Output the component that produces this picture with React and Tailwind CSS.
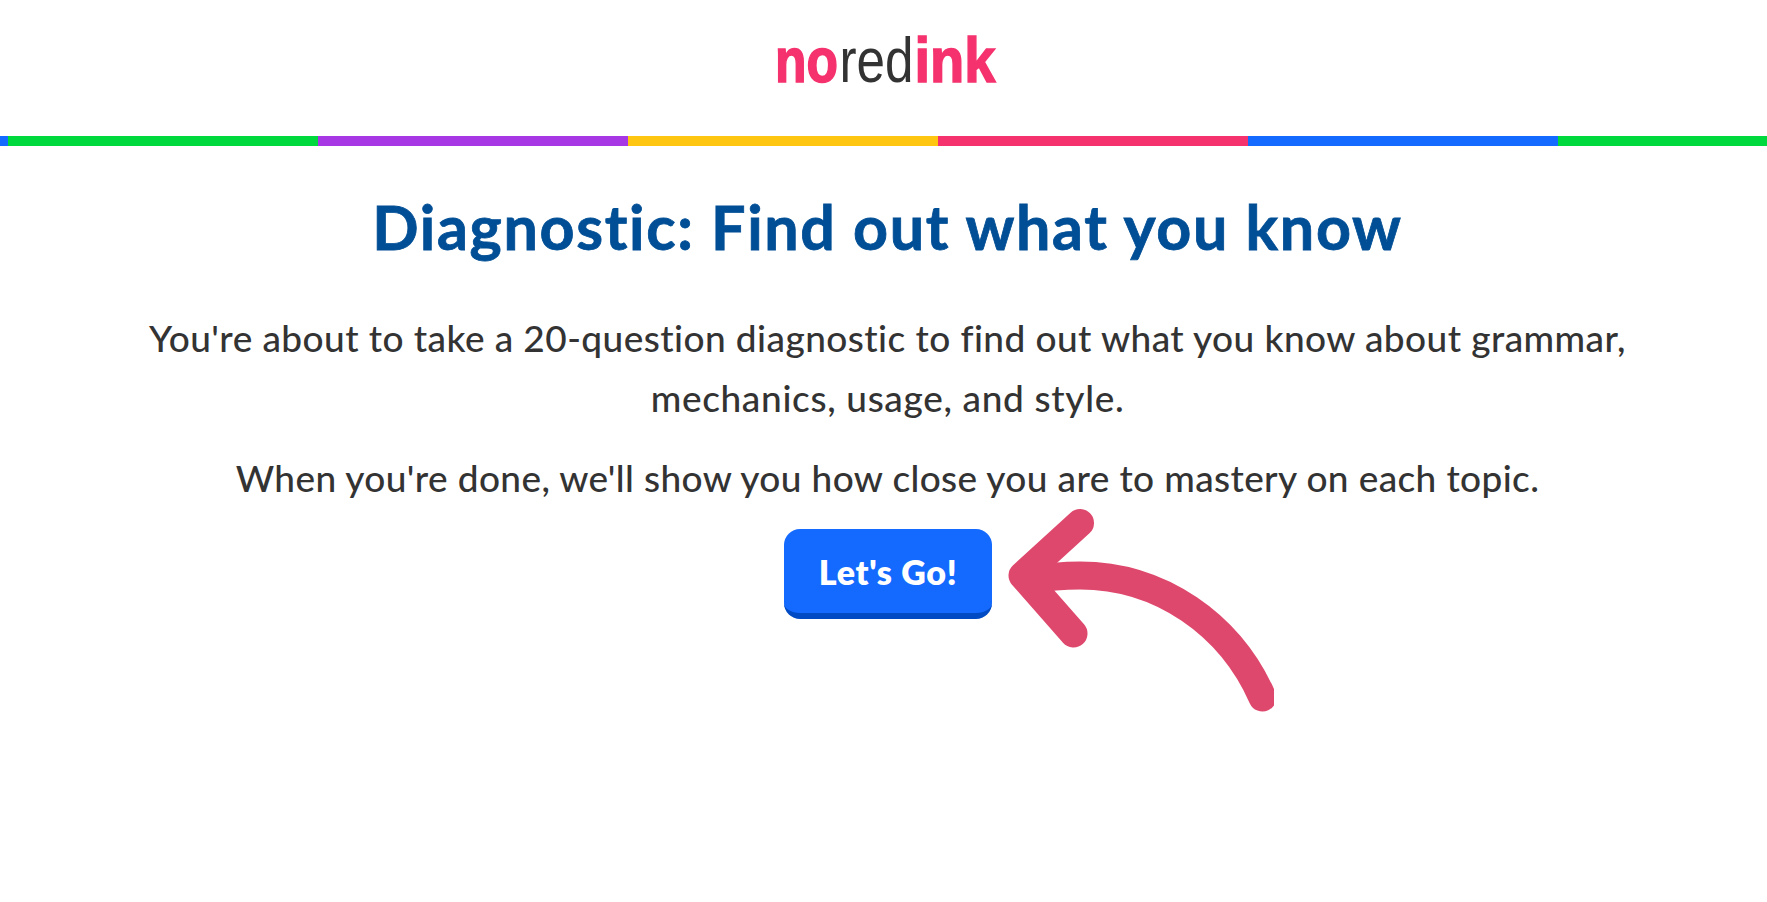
import React from "react";

const STRIPES = [
  "w-2 bg-[#146aff]",
  "w-[310px] bg-[#00d93e]",
  "w-[310px] bg-[#a737e5]",
  "w-[310px] bg-[#fec611]",
  "w-[310px] bg-[#f5326d]",
  "w-[310px] bg-[#146aff]",
  "flex-1 bg-[#00d93e]",
];

function Logo() {
  return (
    <svg width="240" height="110" viewBox="767 10 240 110" role="img" aria-label="noredink" className="font-['Liberation_Sans']">
      <g fontSize="63">
        <text x="775" y="82.3" textLength="63" lengthAdjust="spacingAndGlyphs" fontWeight="700" fill="#f5326d" stroke="#f5326d" strokeWidth="1.6">no</text>
        <text x="839.5" y="82.3" textLength="74" lengthAdjust="spacingAndGlyphs" fill="#333333">red</text>
        <text x="914.5" y="82.3" textLength="81" lengthAdjust="spacingAndGlyphs" fontWeight="700" fill="#f5326d" stroke="#f5326d" strokeWidth="1.6">ink</text>
      </g>
    </svg>
  );
}

function Arrow() {
  return (
    <svg
      width="266"
      height="206"
      viewBox="1008 508 266 206"
      fill="none"
      stroke="#df486d"
      strokeWidth="28"
      strokeLinecap="round"
      strokeLinejoin="round"
      className="absolute left-[224px] -top-[22px]"
    >
      <path d="M1080 524 L1022.5 576.5 L1073.5 634.5" />
      <path d="M1030 581 Q1055 576.5 1080 576.5 C1160 576.5 1230 625 1262.5 698.5" />
    </svg>
  );
}

function App() {
  return (
    <div className="min-h-screen bg-white text-[#333333] font-['Lato',sans-serif] overflow-hidden">
      <header className="h-[136px] pt-[10px] pl-[7px] flex justify-center">
        <Logo />
      </header>

      <div className="flex h-[10px]">
        {STRIPES.map((stripe, i) => (
          <div key={i} className={stripe} />
        ))}
      </div>

      <main className="pl-2 pt-[45px] flex flex-col items-center text-center whitespace-nowrap">
        <h1 className="text-[61px] leading-[72px] font-bold text-[#004e95] tracking-[1.65px] [-webkit-text-stroke:0.8px_#004e95]">
          Diagnostic: Find out what you know
        </h1>
        <p className="mt-[45px] text-[37px] leading-[60px] font-medium tracking-[0.43px]">
          You're about to take a 20-question diagnostic to find out what you know about grammar,
          <br />
          <span className="tracking-[0.66px]">mechanics, usage, and style.</span>
        </p>
        <p className="mt-5 text-[37px] leading-[60px] font-medium tracking-[0.38px]">
          When you're done, we'll show you how close you are to mastery on each topic.
        </p>
        {/* Boton principal con la flecha encima */}
        <div className="relative mt-[21px]">
          <button className="block w-[208px] h-[90px] pl-px rounded-2xl border-b-[6px] border-[#004bc4] bg-[#146aff] text-white text-[34px] font-extrabold tracking-[0.7px]">
            Let's Go!
          </button>
          <Arrow />
        </div>
      </main>
    </div>
  );
}

export default App;
